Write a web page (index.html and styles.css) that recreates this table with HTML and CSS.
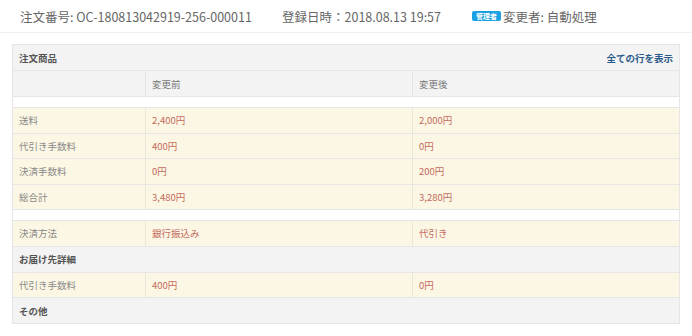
FILE: index.html
```html
<!DOCTYPE html>
<html lang="ja">
<head>
<meta charset="utf-8">
<link rel="stylesheet" href="styles.css">
</head>
<body>
<div class="topbar">
  <span class="meta meta-order">注文番号: OC-180813042919-256-000011</span>
  <span class="meta meta-date">登録日時：2018.08.13 19:57</span>
  <span class="meta meta-user"><span class="badge">管理者</span>変更者: 自動処理</span>
</div>
<div class="panel">
  <div class="row head">
    <div class="cell title">注文商品</div>
    <div class="cell link">全ての行を表示</div>
  </div>
  <div class="row head">
    <div class="cell c1"></div>
    <div class="cell c2">変更前</div>
    <div class="cell c3">変更後</div>
  </div>
  <div class="row blank"></div>
  <div class="row diff">
    <div class="cell c1">送料</div>
    <div class="cell c2">2,400円</div>
    <div class="cell c3">2,000円</div>
  </div>
  <div class="row diff">
    <div class="cell c1">代引き手数料</div>
    <div class="cell c2">400円</div>
    <div class="cell c3">0円</div>
  </div>
  <div class="row diff">
    <div class="cell c1">決済手数料</div>
    <div class="cell c2">0円</div>
    <div class="cell c3">200円</div>
  </div>
  <div class="row diff">
    <div class="cell c1">総合計</div>
    <div class="cell c2">3,480円</div>
    <div class="cell c3">3,280円</div>
  </div>
  <div class="row blank"></div>
  <div class="row diff">
    <div class="cell c1">決済方法</div>
    <div class="cell c2">銀行振込み</div>
    <div class="cell c3">代引き</div>
  </div>
  <div class="row head">
    <div class="cell title">お届け先詳細</div>
  </div>
  <div class="row diff">
    <div class="cell c1">代引き手数料</div>
    <div class="cell c2">400円</div>
    <div class="cell c3">0円</div>
  </div>
  <div class="row head">
    <div class="cell title">その他</div>
  </div>
</div>
</body>
</html>
```
FILE: styles.css
```css
html, body {
  margin: 0;
  padding: 0;
  background: #ffffff;
  font-family: "Noto Sans CJK JP", "Noto Sans", sans-serif;
}
.topbar {
  height: 32px;
  border-bottom: 1px solid #eeeeee;
  display: flex;
  align-items: center;
  padding-left: 20px;
  color: #666666;
  font-size: 12.5px;
  box-sizing: content-box;
}
.meta-order { width: 262px; }
.meta-date { width: 190px; }
.meta-user { display: flex; align-items: center; }
.badge {
  display: inline-block;
  background: #1ba1e2;
  color: #ffffff;
  font-size: 7px;
  font-weight: bold;
  line-height: 10px;
  padding: 0 4px;
  border-radius: 2px;
  margin-right: 2px;
}
.panel {
  margin: 11px 12px 0 12px;
  border: 1px solid #e6e6e6;
  font-size: 9.5px;
}
.row {
  display: flex;
  height: 25.5px;
  border-bottom: 1px solid #e6e6e6;
  box-sizing: border-box;
}
.row:last-child { border-bottom: none; height: 24.5px; }
.row.head { background: #f3f3f3; height: 26px; }
.row.head:last-child { height: 25px; }
.row.blank { height: 11px; background: #ffffff; }
.row.diff { background: #fcf7e4; }
.cell {
  display: flex;
  align-items: center;
  padding: 0 6px;
  box-sizing: border-box;
}
.c1 { width: 133px; color: #888888; border-right: 1px solid #e9e6dc; }
.c2 { width: 267px; color: #c46a5f; border-right: 1px solid #e9e6dc; }
.c3 { flex: 1; color: #c46a5f; }
.head .c1, .head .c2 { border-right-color: #e4e4e4; }
.head .c2, .head .c3 { color: #777777; }
.title { flex: 1; font-weight: bold; color: #555555; }
.link { font-weight: bold; color: #2a5a8c; }
```
